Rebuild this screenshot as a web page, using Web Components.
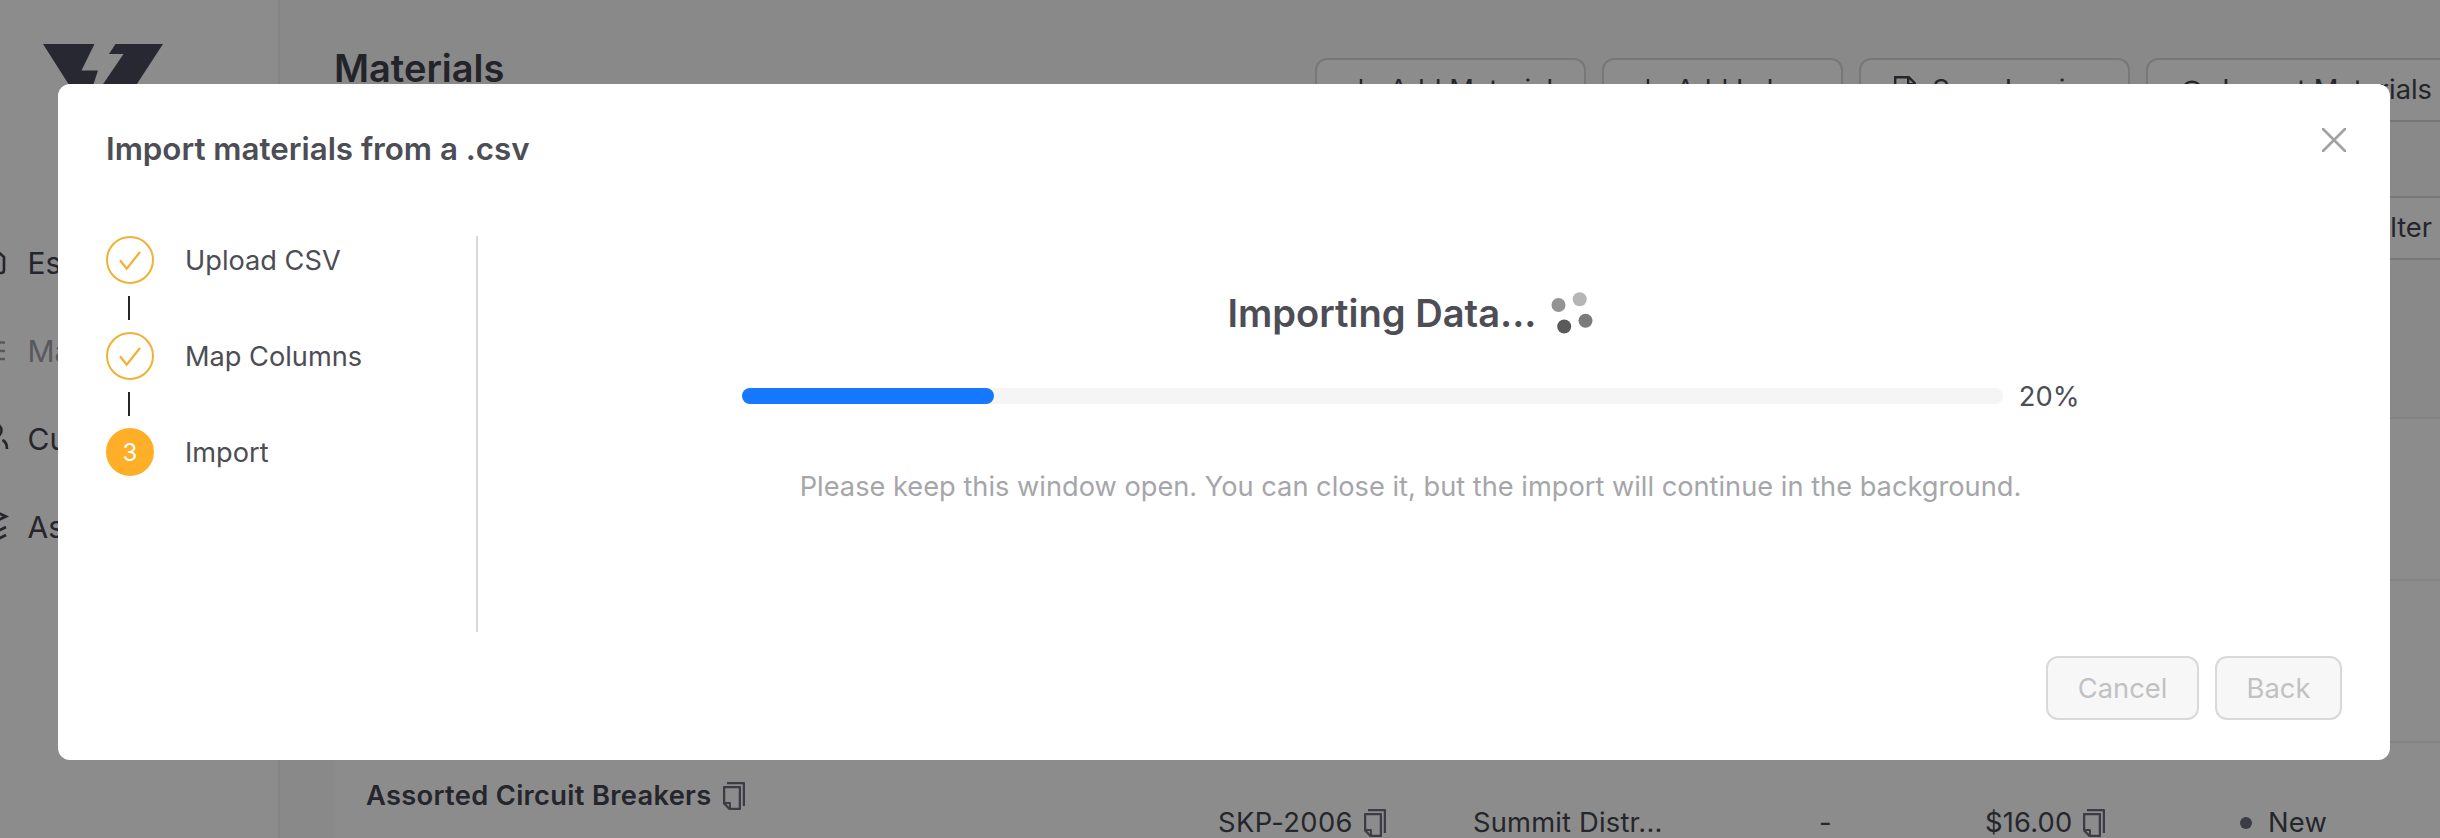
<!DOCTYPE html>
<html lang="en">
<head>
<meta charset="utf-8">
<title>Materials</title>
<style>
  body {
    margin: 0;
    height: 838px;
    overflow: hidden;
    position: relative;
    display: flex;
    background-color: #f9f9f9;
    color: #44464f;
    font-family: Inter, "Liberation Sans", sans-serif;
    font-size: 27.3px;
    line-height: 44px;
  }
</style>
</head>
<body>
<side-nav>
  <nav-item icon="file">Estimates</nav-item>
  <nav-item icon="list" muted>Materials</nav-item>
  <nav-item icon="user">Customers</nav-item>
  <nav-item icon="layers">Assemblies</nav-item>
</side-nav>
<materials-page>
  <tool-button slot="actions" icon="plus" style="width:271px">Add Material</tool-button>
  <tool-button slot="actions" icon="plus" style="width:241px">Add Labor</tool-button>
  <tool-button slot="actions" icon="doc" style="width:271px">Scan Invoice</tool-button>
  <tool-button slot="actions" icon="cloud" style="width:319px">Import Materials</tool-button>
  <tool-button slot="filter" icon="plus" style="width:160px">Filter</tool-button>
  <material-row></material-row>
  <material-row></material-row>
  <material-row>
    <span slot="name">Assorted Circuit Breakers</span>
    <span slot="sku">SKP-2006</span>
    <span slot="vendor">Summit Distr...</span>
    <span slot="labor">-</span>
    <span slot="price">$16.00</span>
    <span slot="status">New</span>
  </material-row>
</materials-page>
<import-modal>
  <span slot="title">Import materials from a .csv</span>
  <step-item slot="steps" done>Upload CSV</step-item>
  <step-item slot="steps" done>Map Columns</step-item>
  <step-item slot="steps" number="3">Import</step-item>
  <span slot="heading">Importing Data...</span>
  <progress-bar slot="progress" percent="20"></progress-bar>
  <span slot="note">Please keep this window open. You can close it, but the import will continue in the background.</span>
  <modal-button slot="footer" style="width:153px">Cancel</modal-button>
  <modal-button slot="footer" style="width:127px">Back</modal-button>
</import-modal>

<script>
const icons = {
  file: `<path d="M2 1h14l8 7v13q0 3-3 3H2z"/>`,
  list: `<path d="M2 5.500h23M2 14h23M2 22h23"/>`,
  user: `<circle cx="15" cy="5.500" r="6.500"/><path d="M2 24c0-8 6-11 12-11M22.500 15c3 1.500 4.500 4 4.500 9"/>`,
  layers: `<path d="M14-2l12 5.500-12 5.500-12-5.500zM2 18l12 2 12-6M2 24l12 4 12-6"/>`,
  plus: `<path d="M14 3v22M3 14h22"/>`,
  doc: `<path d="M4.200 1.200h13.600l6 6v19.600H4.200zM17.200 1.200v7h7"/>`,
  cloud: `<path d="M9 22.500H7a5.500 5.500 0 0 1-1.500-10.700 9 9 0 0 1 17 0A5.500 5.500 0 0 1 21 22.500h-2M14 26V14"/>`
};

function svgIcon(name, width) {
  return `<svg width="28" height="28" viewBox="0 0 28 28" fill="none" stroke="currentColor" stroke-width="${width}" overflow="visible">${icons[name] || ""}</svg>`;
}

const copyIcon = `<svg class="copy" width="28" height="28" viewBox="64 64 896 896" fill="currentColor"><path d="M832 64H296c-4.400 0-8 3.600-8 8v56c0 4.400 3.600 8 8 8h496v688c0 4.400 3.600 8 8 8h56c4.400 0 8-3.600 8-8V96c0-17.700-14.300-32-32-32zM704 192H192c-17.700 0-32 14.300-32 32v530.700c0 8.500 3.400 16.600 9.400 22.600l173.300 173.300c2.200 2.200 4.700 4 7.400 5.500v1.900h4.200c3.500 1.300 7.200 2 11 2H704c17.700 0 32-14.300 32-32V224c0-17.700-14.300-32-32-32zM350 856.200L263.900 770H350v86.200zM664 888H414V746c0-22.100-17.900-40-40-40H232V264h432v624z"/></svg>`;

class SideNav extends HTMLElement {
  connectedCallback() {
    this.attachShadow({ mode: "open" }).innerHTML = `
<style>
  :host {
    box-sizing: border-box;
    flex: none;
    width: 280px;
    height: 838px;
    padding-top: 44px;
    background-color: #fff;
    border-right: 2px solid #f0f0f0;
  }
  .logo {
    display: block;
    margin-left: 43px;
    color: #474a5b;
  }
  nav {
    display: flex;
    flex-direction: column;
    gap: 44px;
    margin-top: 95px;
  }
</style>
<svg class="logo" width="120" height="102" viewBox="0 0 120 102" fill="currentColor">
  <path d="M0 0h51.500L38.500 26.500H55L42 66z"/>
  <path d="M72.500 0H120L60 92l-8-40L80.500 10H66z"/>
</svg>
<nav><slot></slot></nav>`;
  }
}

class NavItem extends HTMLElement {
  connectedCallback() {
    this.attachShadow({ mode: "open" }).innerHTML = `
<style>
  :host {
    display: flex;
    align-items: center;
    gap: 19.500px;
    height: 44px;
    margin-left: -20px;
    font-size: 30px;
  }
  :host([muted]) { color: #a0a2ab; }
</style>
${svgIcon(this.getAttribute("icon"), 2.6)}<slot></slot>`;
  }
}

class ToolButton extends HTMLElement {
  connectedCallback() {
    this.attachShadow({ mode: "open" }).innerHTML = `
<style>
  :host {
    box-sizing: border-box;
    flex: none;
    display: flex;
    align-items: center;
    justify-content: space-between;
    height: 64px;
    padding: 0 31px 0 30px;
    white-space: nowrap;
    background-color: #fff;
    border: 2px solid #d9d9d9;
    border-radius: 12px;
  }
</style>
${svgIcon(this.getAttribute("icon"), 2.4)}<span><slot></slot></span>`;
  }
}

class MaterialsPage extends HTMLElement {
  connectedCallback() {
    this.attachShadow({ mode: "open" }).innerHTML = `
<style>
  :host {
    box-sizing: border-box;
    display: block;
    flex: none;
    width: 2185px;
    height: 838px;
    overflow: hidden;
    padding-left: 54px;
  }
  header {
    display: flex;
    align-items: flex-start;
    justify-content: space-between;
    padding-top: 58px;
  }
  h1 {
    margin: -14px 0 0;
    font-size: 38px;
    font-weight: 600;
    line-height: 48px;
    color: #40424e;
  }
  .actions { display: flex; gap: 16px; }
  .filter {
    display: flex;
    justify-content: flex-end;
    margin-top: 74px;
  }
  .table {
    margin-top: 157px;
    border-top: 2px solid #f0f0f0;
    background-color: #fff;
  }
</style>
<header><h1>Materials</h1><div class="actions"><slot name="actions"></slot></div></header>
<div class="filter"><slot name="filter"></slot></div>
<div class="table"><slot></slot></div>`;
  }
}

class MaterialRow extends HTMLElement {
  connectedCallback() {
    const filled = this.childElementCount > 0;
    this.attachShadow({ mode: "open" }).innerHTML = `
<style>
  :host {
    box-sizing: border-box;
    display: grid;
    grid-template-columns: 851px 256px 346px 166px 255px 1fr;
    align-items: center;
    height: 162px;
    padding-left: 32px;
    border-bottom: 2px solid #f0f0f0;
  }
  div { display: flex; align-items: center; letter-spacing: 0.200px; }
  .name {
    align-self: start;
    margin-top: 31px;
    font-weight: 600;
    letter-spacing: 0.3px;
  }
  .sku { padding-left: 1px; letter-spacing: 0.400px; }
  .copy { margin-left: 8px; color: #6d6f7c; }
  .dot {
    width: 12px;
    height: 12px;
    margin-right: 16px;
    border-radius: 50%;
    background-color: #6c6e7c;
  }
</style>` + (filled ? `
<div class="name"><slot name="name"></slot>${copyIcon}</div>
<div class="sku"><slot name="sku"></slot>${copyIcon}</div>
<div><slot name="vendor"></slot></div>
<div><slot name="labor"></slot></div>
<div><slot name="price"></slot>${copyIcon}</div>
<div><span class="dot"></span><slot name="status"></slot></div>` : "");
  }
}

class ImportModal extends HTMLElement {
  connectedCallback() {
    this.attachShadow({ mode: "open" }).innerHTML = `
<style>
  :host {
    box-sizing: border-box;
    position: absolute;
    inset: 0;
    display: block;
    padding: 84px 50px 0 58px;
    background-color: rgba(0, 0, 0, 0.45);
    color: #4c4d55;
  }
  .dialog {
    box-sizing: border-box;
    position: relative;
    height: 676px;
    padding: 40px 48px;
    background-color: #fff;
    border-radius: 12px;
  }
  .close {
    position: absolute;
    top: 44px;
    right: 44px;
    stroke: #a1a1a3;
  }
  h2 {
    margin: 0 0 62px;
    padding-top: 1px;
    font-size: 31.300px;
    font-weight: 600;
    line-height: 49px;
  }
  .body { display: flex; height: 396px; }
  .steps {
    box-sizing: border-box;
    width: 372px;
    border-right: 2px solid #d9d9d9;
  }
  .content {
    flex: 1;
    display: flex;
    flex-direction: column;
    align-items: center;
    padding: 53px 0 0 1px;
  }
  h3 {
    display: flex;
    align-items: center;
    gap: 15px;
    margin: 0 0 37px;
    font-size: 38.100px;
    font-weight: 600;
    line-height: 48px;
  }
  .note { margin-top: 47px; font-size: 27.220px; color: #a5a6a9; }
  footer {
    display: flex;
    justify-content: flex-end;
    gap: 16px;
    margin-top: 24px;
  }
</style>
<div class="dialog">
  <svg class="close" width="24" height="24" viewBox="0 0 24 24" stroke-width="2.600" stroke-linecap="round"><path d="M1 1l22 22M23 1L1 23"/></svg>
  <h2><slot name="title"></slot></h2>
  <div class="body">
    <div class="steps"><slot name="steps"></slot></div>
    <div class="content">
      <h3><slot name="heading"></slot>
        <svg width="42" height="42" viewBox="-21 -21 42 42">
          <circle cx="-13.500" cy="-8" r="7" fill="#949495"/>
          <circle cx="7.700" cy="-13.700" r="7" fill="#b5b5b6"/>
          <circle cx="13.500" cy="7.700" r="7" fill="#7b7b7c"/>
          <circle cx="-7.800" cy="13.500" r="7" fill="#5a5a5b"/>
        </svg>
      </h3>
      <slot name="progress"></slot>
      <div class="note"><slot name="note"></slot></div>
    </div>
  </div>
  <footer><slot name="footer"></slot></footer>
</div>`;
  }
}

class StepItem extends HTMLElement {
  connectedCallback() {
    const done = this.hasAttribute("done");
    this.attachShadow({ mode: "open" }).innerHTML = `
<style>
  :host { display: block; }
  .row {
    display: flex;
    align-items: center;
    gap: 31px;
    height: 48px;
  }
  .label { padding-top: 1px; font-size: 27.200px; }
  .circle {
    box-sizing: border-box;
    display: flex;
    align-items: center;
    justify-content: center;
    width: 48px;
    height: 48px;
    border: 2px solid #f2b136;
    border-radius: 50%;
    font-size: 24px;
    color: #fff;
    background-color: #ffaf27;
  }
  .number {
    padding-top: 2px;
    border-color: #ffaf27;
  }
  .done { background-color: #fff; }
  .line {
    width: 2px;
    height: 24px;
    margin: 12px 0 12px 22px;
    background-color: #26262a;
  }
</style>
<div class="row">
  <div class="circle ${done ? "done" : "number"}">${done
    ? `<svg width="24" height="24" viewBox="0 0 24 24" fill="none" stroke="#f2b136" stroke-width="2.200"><path d="M2 12.300l6.700 8.400L22 4"/></svg>`
    : this.getAttribute("number")}</div>
  <span class="label"><slot></slot></span>
</div>
${done ? `<div class="line"></div>` : ""}`;
  }
}

class ProgressBar extends HTMLElement {
  connectedCallback() {
    const percent = this.getAttribute("percent");
    this.attachShadow({ mode: "open" }).innerHTML = `
<style>
  :host {
    display: flex;
    align-items: center;
    gap: 16px;
    width: 1338px;
    height: 44px;
  }
  .track {
    width: 1262px;
    height: 16px;
    border-radius: 8px;
    background-color: #f5f5f5;
  }
  .fill {
    width: ${percent}%;
    height: 16px;
    border-radius: 8px;
    background-color: #1677ff;
  }
  span { padding-top: 1px; }
</style>
<div class="track"><div class="fill"></div></div>
<span>${percent}%</span>`;
  }
}

class ModalButton extends HTMLElement {
  connectedCallback() {
    this.attachShadow({ mode: "open" }).innerHTML = `
<style>
  :host {
    box-sizing: border-box;
    display: flex;
    align-items: center;
    justify-content: center;
    height: 64px;
    padding-top: 1px;
    color: #c1c1c3;
    background-color: #f7f7f7;
    border: 2px solid #d9d9d9;
    border-radius: 12px;
  }
</style>
<slot></slot>`;
  }
}

customElements.define("side-nav", SideNav);
customElements.define("nav-item", NavItem);
customElements.define("tool-button", ToolButton);
customElements.define("materials-page", MaterialsPage);
customElements.define("material-row", MaterialRow);
customElements.define("import-modal", ImportModal);
customElements.define("step-item", StepItem);
customElements.define("progress-bar", ProgressBar);
customElements.define("modal-button", ModalButton);
</script>
</body>
</html>
